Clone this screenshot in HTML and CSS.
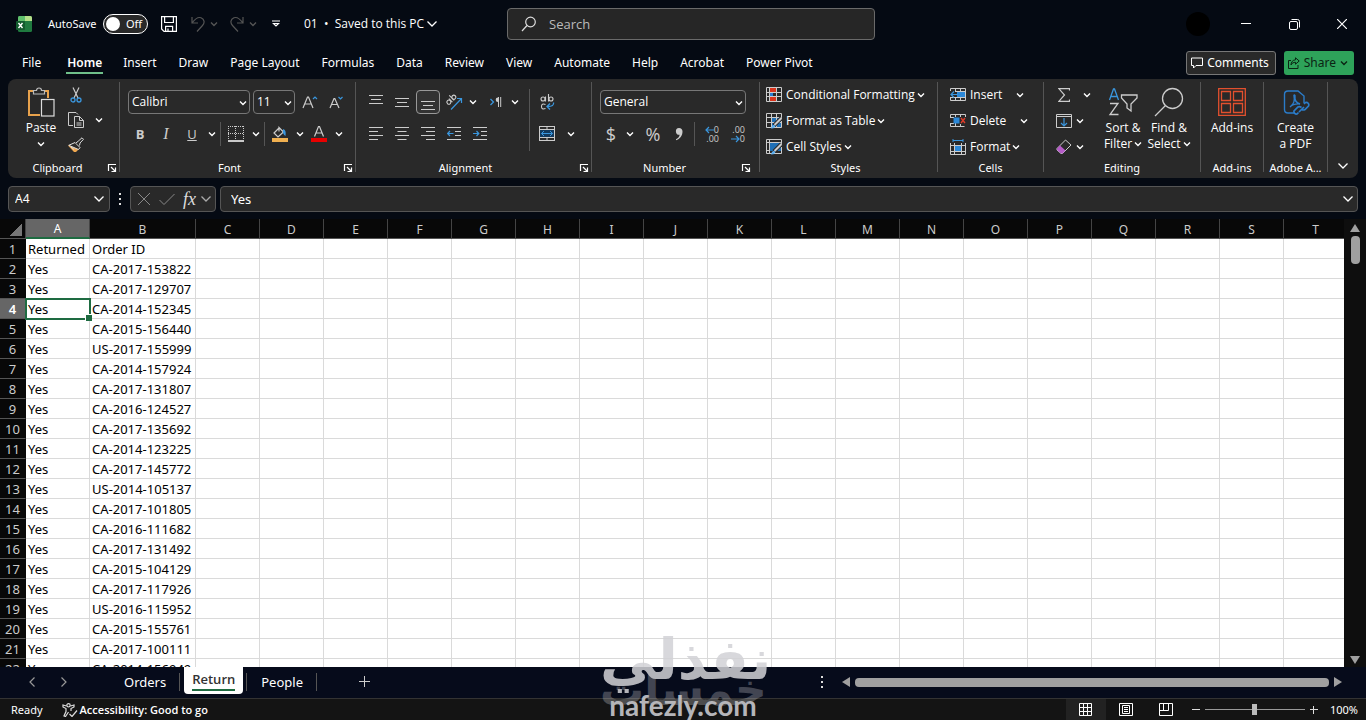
FILE: index.html
```html
<!DOCTYPE html>
<html lang="en">
<head>
<meta charset="UTF-8">
<meta name="viewport" content="width=device-width, initial-scale=1.0">
<title>01 - Excel</title>
<link rel="stylesheet" href="styles.css">
</head>
<body>

<svg class="defs" aria-hidden="true">
    <symbol id="chev" viewBox="0 0 8 8"><path d="M1 2.5l3 3 3-3" fill="none" stroke="currentColor" stroke-width="1.4"/></symbol>
    <symbol id="chevBig" viewBox="0 0 12 12"><path d="M1.500 3.500l4.500 4.500 4.500-4.500" fill="none" stroke="currentColor" stroke-width="1.3"/></symbol>
    <symbol id="launch" viewBox="0 0 10 10"><path d="M1.500 8V1.500H9M4 4l4 4M8.500 4.500v4H4.500" fill="none" stroke="currentColor" stroke-width="1.2"/></symbol>
</svg>

<header class="titlebar">
    <div class="title-left">
        <svg class="logo" width="16" height="16" viewBox="0 0 16 16"><rect x="2" width="14" height="16" rx="1.500" fill="#1f7a3f"/><path d="M2 5V1.500Q2 0 3.500 0H9v5z" fill="#5fbf6c"/><path d="M9 0h5.500Q16 0 16 1.500V5H9z" fill="#b5e08a"/><rect y="5" width="9" height="9" rx="1" fill="#135c2e"/><path d="M2.500 7l4 5M6.500 7l-4 5" stroke="#fff" stroke-width="1.400"/></svg>
        <span class="autosave">AutoSave</span>
        <button class="toggle" aria-label="AutoSave"><i></i>Off</button>
        <button class="qat save" aria-label="Save"><svg width="16" height="16" viewBox="0 0 16 16" fill="none" stroke="#fff" stroke-width="1.200"><path d="M.6.6h14.800v14.800H3L.6 13zM3.600.6v5.900h8.800V.6M4.600 15.400v-5h7v5M7 15v-2.500"/></svg></button>
        <button class="qat dim" aria-label="Undo"><svg width="14" height="16" viewBox="0 0 14 16" fill="none" stroke="currentColor" stroke-width="1.200"><path d="M1 1v6h6M1 7C4 3 7 .6 10 1.800c3.500 1.500 4 5 1.500 7.700L6 15.500"/></svg></button>
        <button class="qat dim small" aria-label="Undo list"><svg width="8" height="8"><use href="#chev"/></svg></button>
        <button class="qat dim" aria-label="Redo"><svg width="14" height="16" viewBox="0 0 14 16" fill="none" stroke="currentColor" stroke-width="1.200"><path d="M13 1v6H7M13 7C10 3 7 .6 4 1.800.5 3.300 0 6.800 2.500 9.500L8 15.500"/></svg></button>
        <button class="qat dim small" aria-label="Redo list"><svg width="8" height="8"><use href="#chev"/></svg></button>
        <button class="qat custom" aria-label="Customize toolbar"><svg width="8" height="8" viewBox="0 0 8 8" fill="none" stroke="#fff" stroke-width="1.200"><path d="M0 1h8M1.500 3.500h5L4 6z"/></svg></button>
        <button class="doc">01&nbsp; •&nbsp; Saved to this PC <svg width="12" height="12"><use href="#chevBig"/></svg></button>
    </div>
    <label class="search">
        <svg width="16" height="16" viewBox="0 0 16 16" fill="none" stroke="#ddd" stroke-width="1.200"><circle cx="9.500" cy="6" r="4.800"/><path d="M6 9.500L1 15"/></svg>
        <input type="text" placeholder="Search" aria-label="Search">
    </label>
    <div class="window">
        <span class="avatar"></span>
        <button aria-label="Minimize"><svg width="10" height="10" viewBox="0 0 10 10"><path d="M0 4.500h10" stroke="#fff"/></svg></button>
        <button aria-label="Restore"><svg width="11" height="11" viewBox="0 0 11 11" fill="none" stroke="#fff"><rect x=".5" y="2.500" width="8" height="8" rx="1.500"/><path d="M2.500.5H8.500a2 2 0 0 1 2 2v6"/></svg></button>
        <button aria-label="Close"><svg width="10" height="10" viewBox="0 0 10 10"><path d="M0 0l10 10M10 0L0 10" stroke="#fff" stroke-width="1.200"/></svg></button>
    </div>
</header>

<nav class="tabs">
    <a href="#" class="file">File</a>
    <a href="#" class="active">Home</a>
    <a href="#">Insert</a>
    <a href="#">Draw</a>
    <a href="#">Page Layout</a>
    <a href="#">Formulas</a>
    <a href="#">Data</a>
    <a href="#">Review</a>
    <a href="#">View</a>
    <a href="#">Automate</a>
    <a href="#">Help</a>
    <a href="#">Acrobat</a>
    <a href="#">Power Pivot</a>
    <button class="comments"><svg width="12" height="12" viewBox="0 0 12 12" fill="none" stroke="#fff"><path d="M.5 1h11v7.500H5L2.500 11V8.500h-2z"/></svg>Comments</button>
    <button class="share"><svg width="12" height="12" viewBox="0 0 12 12" fill="none" stroke="#0b2413"><path d="M3 3.500H.5v8h9.500V8M7.500.8l3.700 3.200-3.700 3.200V5.300C5.500 5.300 4 6 3 8c0-3 1.800-5 4.500-5.200z"/></svg>Share<svg width="8" height="8"><use href="#chev"/></svg></button>
</nav>

<section class="ribbon">
    <div class="group clipboard">
        <div class="body">
            <button class="big paste">
                <svg width="28" height="30" viewBox="0 0 28 30" fill="none"><path d="M6 4H2v24h11M17 4h4v7" stroke="#e8a24c" stroke-width="2"/><path d="M6.500 7V3.500h3a2.500 2.500 0 0 1 5 0h3V7z" stroke="#bbb" stroke-width="1.200"/><rect x="14.500" y="12.500" width="12.500" height="16.500" fill="#292929" stroke="#ddd" stroke-width="1.200"/></svg>
                <span>Paste</span>
                <svg class="under" width="8" height="8"><use href="#chev"/></svg>
            </button>
            <div class="stack">
                <button class="tool" aria-label="Cut"><svg width="12" height="16" viewBox="0 0 12 16" fill="none"><path d="M3 .5l5 10.500M9 .5L4 11" stroke="#ccc" stroke-width="1.200"/><circle cx="3" cy="13" r="2" stroke="#3a96dd" stroke-width="1.300"/><circle cx="9" cy="13" r="2" stroke="#3a96dd" stroke-width="1.300"/></svg></button>
                <button class="tool" aria-label="Copy"><svg width="16" height="16" viewBox="0 0 16 16" fill="none" stroke="#ccc"><path d="M5 13.500H.5V.5H8l2 2M6.500 4.500h5l4 4v7h-9zM11.500 4.500v4h4M8.500 11h5M8.500 13h5"/></svg></button>
                <button class="tool" aria-label="Format Painter"><svg width="16" height="16" viewBox="0 0 16 16"><path d="M0 8.500l6 6.500h2l4-4-5-5z" fill="#f0a850"/><path d="M.8 8.300L7 5.500l5 5-1.500 2z" fill="#292929" stroke="#ddd"/><path d="M8 6l2.200-1.800L14 .8 15.500 2.300 12 6l-.5 2.500" fill="#292929" stroke="#ddd"/><path d="M3 10l3 2.500" stroke="#ddd"/></svg></button>
            </div>
            <button class="drop mid" aria-label="Copy options"><svg width="8" height="8"><use href="#chev"/></svg></button>
        </div>
        <div class="label">Clipboard<button class="launch" aria-label="Clipboard settings"><svg width="10" height="10"><use href="#launch"/></svg></button></div>
    </div>

    <div class="group font">
        <div class="body rows">
            <div class="row">
                <span class="combo face"><select aria-label="Font"><option>Calibri</option></select><svg width="8" height="8"><use href="#chev"/></svg></span>
                <span class="combo size"><select aria-label="Font size"><option>11</option></select><svg width="8" height="8"><use href="#chev"/></svg></span>
                <button class="tool grow" aria-label="Increase font size"><svg width="16" height="16" viewBox="0 0 16 16" fill="none"><path d="M1 14L5.500 3h1L11 14M2.500 10h7" stroke="#ccc" stroke-width="1.200"/><path d="M11 5l2-2 2 2" stroke="#3a96dd" stroke-width="1.200"/></svg></button>
                <button class="tool" aria-label="Decrease font size"><svg width="14" height="16" viewBox="0 0 14 16" fill="none"><path d="M1 14l4-9.500h.8L10 14M2.500 10.500h6" stroke="#ccc" stroke-width="1.200"/><path d="M9.500 3l2 2 2-2" stroke="#3a96dd" stroke-width="1.200"/></svg></button>
            </div>
            <div class="row">
                <button class="tool b">B</button>
                <button class="tool i">I</button>
                <button class="tool u">U</button>
                <button class="drop" aria-label="Underline options"><svg width="8" height="8"><use href="#chev"/></svg></button>
                <i class="sep"></i>
                <button class="tool" aria-label="Borders"><svg width="16" height="16" viewBox="0 0 16 16" fill="none" stroke="#ccc"><path d="M0 .5h16M.5 0v14M15.500 0v14M7.500 0v14M0 7.500h16" stroke-dasharray="1 1"/><path d="M0 15h16" stroke="#fff" stroke-width="1.500"/></svg></button>
                <button class="drop" aria-label="Border options"><svg width="8" height="8"><use href="#chev"/></svg></button>
                <i class="sep"></i>
                <button class="tool" aria-label="Fill colour"><svg width="16" height="16" viewBox="0 0 16 16" fill="none"><path d="M7 2L2 7l4 4 5.500-5L7 1.500v4" stroke="#ccc" stroke-width="1.200"/><path d="M11 3q3.500.5 2.500 7Q10.500 8 11 5" fill="#3a96dd"/><path d="M0 12h16v4H0z" fill="#f0b050"/></svg></button>
                <button class="drop" aria-label="Fill options"><svg width="8" height="8"><use href="#chev"/></svg></button>
                <button class="tool" aria-label="Font colour"><svg width="16" height="16" viewBox="0 0 16 16" fill="none"><path d="M3.500 10.500L7.500.5h1l4 10M5 7h6" stroke="#ccc" stroke-width="1.200"/><path d="M0 12h16v4H0z" fill="#e80000"/></svg></button>
                <button class="drop" aria-label="Font colour options"><svg width="8" height="8"><use href="#chev"/></svg></button>
            </div>
        </div>
        <div class="label">Font<button class="launch" aria-label="Font settings"><svg width="10" height="10"><use href="#launch"/></svg></button></div>
    </div>

    <div class="group align">
        <div class="body">
            <div class="rows">
                <div class="row">
                    <button class="tool" aria-label="Top align"><svg width="14" height="16" viewBox="0 0 14 16"><path d="M0 1.500h14M2 5.500h10M0 9.500h14" stroke="#ccc"/></svg></button>
                    <button class="tool" aria-label="Middle align"><svg width="14" height="16" viewBox="0 0 14 16"><path d="M0 4.500h14M2 8.500h10M0 12.500h14" stroke="#ccc"/></svg></button>
                    <button class="tool on" aria-label="Bottom align"><svg width="14" height="16" viewBox="0 0 14 16"><path d="M0 7.500h14M2 11.500h10M0 15.500h14" stroke="#ccc"/></svg></button>
                    <button class="tool" aria-label="Orientation"><svg width="18" height="18" viewBox="0 0 18 18" fill="none"><g stroke="#ccc" stroke-width="1.100" transform="rotate(-45 6 7)"><circle cx="3" cy="7" r="2"/><path d="M5.500 4.500v5M8 2.500v7"/><circle cx="10" cy="7" r="2"/></g><path d="M6 16.500L16 6M12 5.500h4.500V10" stroke="#3a96dd" stroke-width="1.200"/></svg></button>
                    <button class="drop" aria-label="Orientation options"><svg width="8" height="8"><use href="#chev"/></svg></button>
                    <button class="tool wide" aria-label="Text direction"><svg width="12" height="12" viewBox="0 0 12 12" fill="none"><path d="M.5 3l3 3-3 3" stroke="#3a96dd" stroke-width="1.300"/><path d="M12 1.500H8a2.300 2.300 0 0 0 0 4.600V1.500z" fill="#ccc"/><path d="M8.500 1v10M10.700 1v10" stroke="#ccc"/></svg></button>
                    <button class="drop" aria-label="Direction options"><svg width="8" height="8"><use href="#chev"/></svg></button>
                </div>
                <div class="row">
                    <button class="tool" aria-label="Align left"><svg width="14" height="14" viewBox="0 0 14 14"><path d="M0 .5h14M0 4.500h9M0 8.500h14M0 12.500h9" stroke="#ccc"/></svg></button>
                    <button class="tool" aria-label="Center"><svg width="14" height="14" viewBox="0 0 14 14"><path d="M0 .5h14M2.500 4.500h9M0 8.500h14M2.500 12.500h9" stroke="#ccc"/></svg></button>
                    <button class="tool" aria-label="Align right"><svg width="14" height="14" viewBox="0 0 14 14"><path d="M0 .5h14M5 4.500h9M0 8.500h14M5 12.500h9" stroke="#ccc"/></svg></button>
                    <button class="tool" aria-label="Decrease indent"><svg width="14" height="14" viewBox="0 0 14 14" fill="none"><path d="M0 .5h14M8 4.500h6M8 8.500h6M0 12.500h14" stroke="#ccc"/><path d="M6.500 6.500H1M3 4L.700 6.500 3 9" stroke="#3a96dd" stroke-width="1.200"/></svg></button>
                    <button class="tool" aria-label="Increase indent"><svg width="14" height="14" viewBox="0 0 14 14" fill="none"><path d="M0 .5h14M8 4.500h6M8 8.500h6M0 12.500h14" stroke="#ccc"/><path d="M0 6.500h5.500M3.500 4L5.800 6.500 3.500 9" stroke="#3a96dd" stroke-width="1.200"/></svg></button>
                </div>
            </div>
            <i class="sep tall"></i>
            <div class="rows">
                <div class="row">
                    <button class="tool wrap" aria-label="Wrap text"><svg width="16" height="18" viewBox="0 0 16 18" fill="none"><g stroke="#ccc" stroke-width="1.100"><circle cx="4" cy="6" r="2"/><path d="M6.500 3.500v5M9.500 1v7.500M6.500 11.500q-4-1.500-4 2t4 2"/><circle cx="12" cy="6" r="2"/></g><path d="M14.500 9.500q1 4-6 4M11 10.500l-3 3 3 3" stroke="#3a96dd" stroke-width="1.300"/></svg></button>
                </div>
                <div class="row">
                    <button class="tool wrap" aria-label="Merge and center"><svg width="16" height="16" viewBox="0 0 16 16" fill="none"><rect x=".5" y=".5" width="15" height="14" stroke="#ccc"/><path d="M0 3.500h16M0 11.500h16M8 1v3M8 12v3" stroke="#ccc"/><path d="M1 4h14v7H1z" fill="#123a5e"/><path d="M2.500 7.500h11M5 5L2.500 7.500 5 10M11 5l2.500 2.500L11 10" stroke="#3a96dd"/></svg></button>
                    <button class="drop" aria-label="Merge options"><svg width="8" height="8"><use href="#chev"/></svg></button>
                </div>
            </div>
        </div>
        <div class="label">Alignment<button class="launch" aria-label="Alignment settings"><svg width="10" height="10"><use href="#launch"/></svg></button></div>
    </div>

    <div class="group number">
        <div class="body rows">
            <div class="row">
                <span class="combo format"><select aria-label="Number format"><option>General</option></select><svg width="8" height="8"><use href="#chev"/></svg></span>
            </div>
            <div class="row">
                <button class="tool sign">$</button>
                <button class="drop" aria-label="Currency options"><svg width="8" height="8"><use href="#chev"/></svg></button>
                <button class="tool sign pct">%</button>
                <button class="tool" aria-label="Comma style"><svg width="8" height="14" viewBox="0 0 8 14"><path d="M4 1a3.400 3.400 0 0 1 3.500 3.600C7.500 9 5 12 1 13.300v-1C3.500 11 4.500 9.500 4.600 7.800A3.400 3.400 0 1 1 4 1z" fill="#ccc"/></svg></button>
                <i class="sep"></i>
                <button class="tool dec"><span><svg width="9" height="8" viewBox="0 0 9 8" fill="none" stroke="#3a96dd" stroke-width="1.200"><path d="M9 4H1M4 1L1 4l3 3"/></svg>0</span><span>.00</span></button>
                <button class="tool dec"><span>.00</span><span><svg width="9" height="8" viewBox="0 0 9 8" fill="none" stroke="#3a96dd" stroke-width="1.200"><path d="M0 4h8M5 1l3 3-3 3"/></svg>0</span></button>
            </div>
        </div>
        <div class="label">Number<button class="launch" aria-label="Number settings"><svg width="10" height="10"><use href="#launch"/></svg></button></div>
    </div>

    <div class="group styles">
        <div class="body list">
            <button class="line"><svg width="16" height="16" viewBox="0 0 16 16"><path d="M4 1h6v5H4zM4 10h6v5H4z" fill="#d8341c"/><path d="M4 6h3v4H4z" fill="#2b7cd3"/><path d="M.5.5h15v14h-15zM3.500 0v15M10.500 0v15M0 5.500h16M0 9.500h16" fill="none" stroke="#ccc"/></svg>Conditional Formatting<svg class="c" width="8" height="8"><use href="#chev"/></svg></button>
            <button class="line"><svg width="16" height="16" viewBox="0 0 16 16"><path d="M5 5h10v10H5z" fill="#1f6fb5"/><path d="M.5.5h15v14h-15zM5.500 0v15M10.500 0v15M0 4.500h16M0 9.500h16" fill="none" stroke="#ccc"/><path d="M15.500 5L8 12.500" stroke="#292929" stroke-width="4"/><path d="M15.500 5L8.500 12" stroke="#ccc" stroke-width="2"/><path d="M5 15.500q1-4 3-3.500t1 2-4 1.500" fill="#5fb0f0"/></svg>Format as Table<svg class="c" width="8" height="8"><use href="#chev"/></svg></button>
            <button class="line"><svg width="16" height="16" viewBox="0 0 16 16"><path d="M3 4h12v8H3z" fill="#1f6fb5"/><path d="M.5.5h15v14h-15zM3.500 0v15M0 3.500h16M0 11.500h4" fill="none" stroke="#ccc"/><path d="M15.500 5L8 12.500" stroke="#292929" stroke-width="4"/><path d="M15.500 5L8.500 12" stroke="#ccc" stroke-width="2"/><path d="M5 15.500q1-4 3-3.500t1 2-4 1.500" fill="#5fb0f0"/></svg>Cell Styles<svg class="c" width="8" height="8"><use href="#chev"/></svg></button>
        </div>
        <div class="label">Styles</div>
    </div>

    <div class="group cells">
        <div class="body list">
            <div class="row"><button class="line"><svg width="16" height="16" viewBox="0 0 16 16" fill="none"><path d="M.5 4V1.500h15v12H.5V10M5.500 1v3M10.500 1v12M5.500 10v3.500M5 4.500h11M0 10.500h16" stroke="#ccc"/><path d="M7 5h8v5H7z" fill="#2b88d8"/><path d="M8 7.500H1M4 4.500l-3 3 3 3" stroke="#3a96dd" stroke-width="1.200"/></svg>Insert</button><button class="drop far" aria-label="Insert options"><svg width="8" height="8"><use href="#chev"/></svg></button></div>
            <div class="row"><button class="line"><svg width="16" height="16" viewBox="0 0 16 16" fill="none"><path d="M.5 5V1.500h15V4M5.500 1v3M10.500 1v3M.5 10v3.500h14M5.500 10v3M10.500 11v3M0 4.500h4M0 10.500h4" stroke="#ccc"/><path d="M3.500 4.500h6v6h-6z" fill="#2b88d8"/><path d="M11 5l4 5M15 5l-4 5" stroke="#e03c28" stroke-width="1.400"/></svg>Delete</button><button class="drop far" aria-label="Delete options"><svg width="8" height="8"><use href="#chev"/></svg></button></div>
            <button class="line"><svg width="16" height="16" viewBox="0 0 16 16" fill="none"><path d="M3 0v3M13 0v3M3 1.500h10" stroke="#3a96dd"/><path d="M.5 4v11.500h15V4M4.500 4v11M11.500 4v11M0 6.500h16M0 12.500h16" stroke="#ccc"/><path d="M5 7h6v5H5z" fill="#2b88d8"/></svg>Format<svg class="c" width="8" height="8"><use href="#chev"/></svg></button>
        </div>
        <div class="label">Cells</div>
    </div>

    <div class="group editing">
        <div class="body">
            <div class="list">
                <div class="row"><button class="tool" aria-label="AutoSum"><svg width="12" height="14" viewBox="0 0 12 14" fill="none" stroke="#ccc" stroke-width="1.200"><path d="M11.500 2.500V.6H.8L6.500 7 .8 13.400h10.700v-2"/></svg></button><button class="drop sum" aria-label="AutoSum options"><svg width="8" height="8"><use href="#chev"/></svg></button></div>
                <div class="row"><button class="tool" aria-label="Fill"><svg width="16" height="14" viewBox="0 0 16 14" fill="none"><path d="M.5.5h15v13H.5zM0 2.500h16" stroke="#ccc"/><path d="M8 4v8M5 9l3 3 3-3" stroke="#3a96dd" stroke-width="1.200"/></svg></button><button class="drop" aria-label="Fill options"><svg width="8" height="8"><use href="#chev"/></svg></button></div>
                <div class="row"><button class="tool" aria-label="Clear"><svg width="16" height="16" viewBox="0 0 16 16" fill="none"><path d="M1 9.500L9.500 1 15 6l-8.500 8.500H5L1 11z" stroke="#ccc"/><path d="M1 9.500L4 6.500l5.500 5-3 3H5L1 11z" fill="#b65cc8"/></svg></button><button class="drop" aria-label="Clear options"><svg width="8" height="8"><use href="#chev"/></svg></button></div>
            </div>
            <button class="big">
                <svg width="30" height="28" viewBox="0 0 30 28" fill="none"><path d="M1.500 12L5.500 1h1l4 11M3 8.500h6" stroke="#3a96dd" stroke-width="1.300"/><path d="M2 15.500h8L2 26.500h8.500" stroke="#ccc" stroke-width="1.300"/><path d="M13.500 7H29v3l-6 6v7l-4-3v-4l-5.500-6z" stroke="#ccc" stroke-width="1.300"/></svg>
                <span>Sort &amp;</span><span>Filter <svg width="8" height="8"><use href="#chev"/></svg></span>
            </button>
            <button class="big">
                <svg width="30" height="30" viewBox="0 0 30 30" fill="none" stroke="#ccc" stroke-width="1.300"><circle cx="18.500" cy="11.500" r="10"/><path d="M11.500 18.500L1 29"/></svg>
                <span>Find &amp;</span><span>Select <svg width="8" height="8"><use href="#chev"/></svg></span>
            </button>
        </div>
        <div class="label">Editing</div>
    </div>

    <div class="group addins">
        <div class="body">
            <button class="big">
                <svg width="28" height="28" viewBox="0 0 28 28" fill="none" stroke="#e2502e" stroke-width="1.300"><path d="M.7.7h26.600v26.600H.7zM3.500 3.500h9v9h-9zM15.500 3.500h9v9h-9zM3.500 15.500h9v9h-9zM15.500 15.500h9v9h-9z"/></svg>
                <span>Add-ins</span>
            </button>
        </div>
        <div class="label">Add-ins</div>
    </div>

    <div class="group adobe">
        <div class="body">
            <button class="big">
                <svg width="28" height="28" viewBox="0 0 28 28" fill="none" stroke="#2b7cc9" stroke-width="1.400"><path d="M12 25H6q-3.500 0-3.500-3.500v-15Q2.500 3 6 3h10l6 5v7M8 19c4-3 5-7 4-11-.5-1.500 1.500-1.500 1 1-.5 4 2 6 5 7-5-.5-8 1-10 3z"/><path d="M16.500 24.500l-1.500 1.500a2.500 2.500 0 0 1-3-3l4-4q1.500-1 3.500.5M19.500 21.500q2 1 3.500 0l3.500-3.500a2.500 2.500 0 0 0-3-3.500L22 16M17 24l5-5" stroke-width="1.700"/></svg>
                <span>Create</span><span>a PDF</span>
            </button>
        </div>
        <div class="label">Adobe A...</div>
    </div>

    <button class="collapse" aria-label="Collapse ribbon"><svg width="12" height="12"><use href="#chevBig"/></svg></button>
</section>

<section class="formula">
    <label class="namebox"><input type="text" value="A4" aria-label="Name box"><svg width="12" height="12"><use href="#chevBig"/></svg></label>
    <svg class="dots" width="4" height="12" viewBox="0 0 4 12" fill="#ddd"><path d="M1 0h2v2H1zM1 5h2v2H1zM1 10h2v2H1z"/></svg>
    <div class="fx">
        <svg width="14" height="14" viewBox="0 0 14 14"><path d="M1 1l12 12M13 1L1 13" stroke="#888"/></svg>
        <svg width="16" height="14" viewBox="0 0 16 14"><path d="M.5 8l4.500 4.500L15.500 2" fill="none" stroke="#888"/></svg>
        <button class="fxbtn">fx</button>
        <svg width="12" height="12"><use href="#chevBig"/></svg>
    </div>
    <label class="input"><input type="text" value="Yes" aria-label="Formula"><svg width="12" height="12"><use href="#chevBig"/></svg></label>
</section>

<main class="sheet">
    <div class="gridwrap">
        <table class="grid">
            <colgroup id="cols"></colgroup>
            <thead><tr id="head"></tr></thead>
            <tbody id="rows"></tbody>
        </table>
    </div>
    <div class="vscroll">
        <svg width="10" height="8" viewBox="0 0 10 8"><path d="M5 0l5 8H0z" fill="#a0a0a0"/></svg>
        <i class="thumb"></i>
        <svg class="down" width="10" height="8" viewBox="0 0 10 8"><path d="M5 8L0 0h10z" fill="#a0a0a0"/></svg>
    </div>
</main>

<footer class="sheetbar">
    <button class="nav" aria-label="Previous sheet"><svg width="8" height="12" viewBox="0 0 8 12"><path d="M6.500 1.500L2 6l4.500 4.500" fill="none" stroke="#999" stroke-width="1.200"/></svg></button>
    <button class="nav" aria-label="Next sheet"><svg width="8" height="12" viewBox="0 0 8 12"><path d="M1.500 1.500L6 6l-4.500 4.500" fill="none" stroke="#999" stroke-width="1.200"/></svg></button>
    <div class="sheets">
        <button>Orders</button>
        <button class="active"><span>Return</span></button>
        <button>People</button>
    </div>
    <button class="add" aria-label="New sheet"><svg width="12" height="12" viewBox="0 0 12 12"><path d="M0 5.500h11M5.500 0v11" stroke="#ccc"/></svg></button>
    <div class="hscroll">
        <svg class="grip" width="4" height="12" viewBox="0 0 4 12" fill="#ddd"><path d="M1 0h2v2H1zM1 5h2v2H1zM1 10h2v2H1z"/></svg>
        <svg width="8" height="10" viewBox="0 0 8 10"><path d="M0 5l8-5v10z" fill="#a0a0a0"/></svg>
        <i class="thumb"></i>
        <svg width="8" height="10" viewBox="0 0 8 10"><path d="M8 5L0 0v10z" fill="#a0a0a0"/></svg>
    </div>
</footer>

<footer class="status">
    <span>Ready</span>
    <svg class="acc" width="16" height="14" viewBox="0 0 16 14" fill="none" stroke="#ddd" stroke-width="1.200"><circle cx="6.500" cy="2.300" r="1.700"/><path d="M4.500 3L1 2v2l3 1.500v3L2 13l1.500.5L6.500 9M8.500 3L12 2v2L9 5.500V8M7.500 11l2.500 2.500 5-6"/></svg>
    <b>Accessibility: Good to go</b>
    <div class="views">
        <button class="on" aria-label="Normal"><svg width="14" height="14" viewBox="0 0 14 14" fill="none" stroke="#fff"><path d="M.5.5h12v12H.5zM4.500 0v13M8.500 0v13M0 4.500h13M0 8.500h13"/></svg></button>
        <button aria-label="Page layout"><svg width="14" height="14" viewBox="0 0 14 14" fill="none" stroke="#fff"><path d="M.5.5h13v12H.5zM3.500 2.500h7v8h-7zM5 4.500h4M5 6.500h4M5 8.500h4"/></svg></button>
        <button aria-label="Page break"><svg width="14" height="14" viewBox="0 0 14 14" fill="none" stroke="#fff"><path d="M.5.5h13v12H.5zM4.500 0v7.500M9.500 0v7.500M0 7.500h9.500"/></svg></button>
    </div>
    <div class="zoom">
        <button aria-label="Zoom out"><svg width="8" height="8" viewBox="0 0 8 8"><path d="M0 3.500h8" stroke="#ddd"/></svg></button>
        <input type="range" min="0" max="200" value="100" aria-label="Zoom">
        <button aria-label="Zoom in"><svg width="8" height="8" viewBox="0 0 8 8"><path d="M0 3.500h8M3.500 0v8" stroke="#ddd"/></svg></button>
        <span>100%</span>
    </div>
</footer>

<div class="watermark">
    <span class="ar" lang="ar">نفذلي</span>
    <span class="ar low" lang="ar">خمسات</span>
    <span class="en">nafezly.com</span>
</div>

<script src="script.js"></script>
</body>
</html>
```
FILE: styles.css
```css
* { margin: 0; padding: 0; box-sizing: border-box; }
body { height: 100vh; display: flex; flex-direction: column; overflow: hidden; background: #050a13; color: #fff; font: 12px/16px "Noto Sans", "Open Sans", sans-serif; }
button { background: none; border: none; color: inherit; font: inherit; }
input, select { font: inherit; color: inherit; background: none; border: none; outline: none; }
svg { flex: none; display: block; }
a { color: inherit; text-decoration: none; }
.defs { position: absolute; width: 0; height: 0; }

/* title bar */
.titlebar { display: grid; grid-template-columns: 1fr 368px 1fr; align-items: center; height: 48px; padding-left: 16px; }
.title-left { display: flex; align-items: center; white-space: nowrap; font-size: 11px; }
.autosave { margin-left: 16px; width: 55px; }
.toggle { display: flex; align-items: center; gap: 6px; width: 45px; height: 20px; padding: 0 2px; border: 1px solid #fff; border-radius: 10px; background: #292929; }
.toggle i { width: 14px; height: 14px; border-radius: 50%; background: #fff; }
.qat.save { margin: 0 14px 0 13px; }
.dim { color: #555; }
.dim.small { padding: 0 12px 0 5px; }
.custom { margin: 0 24px 0 3px; }
.doc { display: flex; align-items: center; gap: 2px; font: 12px/16px "Open Sans", sans-serif; }
.search { display: flex; align-items: center; gap: 12px; height: 32px; padding: 0 13px; background: #262626; border: 1px solid #6a6a6a; border-radius: 4px; font: 13px/16px "Open Sans", sans-serif; }
.search input { flex: 1; }
.search input::placeholder { color: #bbb; }
.window { display: flex; justify-content: flex-end; align-items: center; }
.window button { width: 48px; height: 48px; display: flex; align-items: center; justify-content: center; }
.avatar { width: 24px; height: 24px; margin-right: 12px; border-radius: 50%; background: #000; }

/* ribbon tabs */
.tabs { display: flex; align-items: center; height: 31px; padding: 0 12px 1px 11px; }
.tabs a { padding: 0 11px; line-height: 22px; }
.tabs a.file { margin-right: 4px; }
.tabs a.active { padding-right: 10px; font-weight: 600; background: linear-gradient(#6fc08a, #6fc08a) center bottom / 37px 2px no-repeat; }
.comments, .share { display: flex; align-items: center; gap: 4px; height: 24px; padding: 0 6px 0 4px; border-radius: 3px; }
.comments { margin-left: auto; margin-right: 8px; background: #292929; border: 1px solid #777; }
.share { background: #2ea35a; color: #0b2413; }

/* ribbon */
.ribbon { display: flex; margin: 0 8px; padding: 3px 0 6px; background: #292929; border-radius: 8px; font-family: "Open Sans", sans-serif; }
.group { border-right: 1px solid #555; }
.body { display: flex; height: 78px; }
.label { position: relative; height: 12px; font: 11px/16px "Noto Sans", sans-serif; text-align: center; }
.launch { position: absolute; right: 2px; top: 3px; }
.row { display: flex; align-items: center; height: 32px; }
.rows { display: flex; flex-direction: column; padding-top: 4px; }
.list { display: flex; flex-direction: column; }
.list .row, .line { height: 26px; }
.line { display: flex; align-items: center; gap: 4px; white-space: nowrap; }
.line .c { margin-left: -2px; }
.tool { display: flex; align-items: center; justify-content: center; width: 26px; height: 24px; color: #ccc; font-size: 13px; }
.tool.on { border: 1px solid #999; border-radius: 4px; background: #333; width: 24px; margin: 0 1px; }
.drop { display: flex; align-items: center; justify-content: center; width: 12px; height: 24px; }
.sep { width: 1px; height: 24px; margin: 0 2px; background: #555; }
.sep.tall { height: 62px; margin: 7px 5px 0 8px; }
.big { display: flex; flex-direction: column; align-items: center; width: 46px; padding-top: 5px; white-space: nowrap; }
.big > svg:first-child { height: 30px; margin-bottom: 3px; }
.big span { display: flex; align-items: center; gap: 2px; }
.under { margin-top: 4px; }
.combo { position: relative; height: 24px; border: 1px solid #777; border-radius: 4px; }
.combo select { appearance: none; width: 100%; height: 100%; padding-left: 3px; }
.combo svg { position: absolute; right: 2px; top: 8px; pointer-events: none; }

.clipboard { width: 112px; }
.paste { margin-left: 10px; }
.clipboard .stack { margin-left: -1px; }
.clipboard .tool { height: 25px; }
.clipboard .label { padding-right: 12px; }
.mid { margin-top: 26px; margin-left: 4px; }
.font { width: 236px; }
.font .body { padding-left: 7px; }
.font .drop { width: 13px; }
.face { width: 122px; margin: 0 3px 0 1px; }
.size { width: 42px; }
.grow { margin-left: 2px; }
.b { font-weight: 700; }
.i { font-family: "Liberation Serif", serif; font-style: italic; font-size: 16px; }
.u { text-decoration: underline; }
.font .label, .align .label { padding-right: 16px; }
.align { width: 236px; }
.align .rows:first-child { padding-left: 7px; }
.align .wide { margin-left: 4px; }
.wrap { width: 24px; }
.wrap + .drop { margin-left: 6px; }
.number { width: 168px; }
.number .body { padding-left: 6px; }
.number .label { padding-right: 22px; }
.number .launch { right: 8px; }
.format { width: 146px; margin-left: 2px; }
.sign { font-size: 18px; }
.pct { margin-left: 4px; }
.dec { flex-direction: column; font-size: 9px; line-height: 9px; align-items: flex-end; padding-right: 4px; }
.dec span { display: flex; align-items: center; }
.styles { width: 178px; }
.styles .body { padding-left: 6px; }
.styles .label { padding-right: 6px; }
.cells { width: 106px; }
.cells .body { padding-left: 12px; }
.far { margin-left: 12px; }
.editing { width: 157px; }
.editing .list { padding-left: 7px; margin-right: 7px; }
.editing .list .drop { margin-left: -3px; }
.editing .list .sum { margin-left: 4px; }
.addins { width: 63px; }
.adobe { width: 64px; }
.addins .body, .adobe .body { justify-content: center; }
.collapse { align-self: flex-end; margin: 0 auto; }

/* formula bar */
.formula { display: flex; align-items: center; height: 26px; margin: 8px 8px 7px; font-size: 13px; }
.namebox, .fx, .input { display: flex; align-items: center; height: 26px; background: #292929; border: 1px solid #555; border-radius: 4px; }
.namebox { width: 102px; padding: 0 4px 0 6px; font-size: 12px; }
.namebox input, .input input { flex: 1; width: 100%; min-width: 0; }
.dots { margin: 0 8px; }
.fx { width: 86px; gap: 8px; padding: 0 1px 0 6px; color: #aaa; }
.fxbtn { font: italic 18px/20px "Liberation Serif", serif; color: #ddd; }
.fx svg:last-child { margin-left: -4px; }
.input { flex: 1; margin-left: 4px; padding: 0 3px 0 10px; }

/* sheet */
.sheet { flex: 1; min-height: 0; display: flex; }
.gridwrap { flex: 1; min-width: 0; overflow: hidden; background: #fff; }
.grid { width: 1348px; table-layout: fixed; border-collapse: separate; border-spacing: 0; font: 13px/18px "Noto Sans", sans-serif; color: #000; }
.grid th { background: #080808; color: #ccc; font-weight: 400; border-right: 1px solid #444; border-bottom: 1px solid #555; }
.grid thead th { height: 20px; padding-top: 1px; font-size: 12px; line-height: 17px; }
.grid tbody th { border-right-color: #080808; }
.grid td { height: 20px; padding: 1px 2px 0; white-space: nowrap; border-right: 1px solid #dadada; border-bottom: 1px solid #dadada; }
.grid th.sel { background: #666; color: #fff; }
.grid thead th.sel { border-bottom: 2px solid #1e6b41; }
.grid tbody th.sel { font-weight: 600; }
.grid .corner { background: linear-gradient(135deg, #080808 50%, #777 50%) 10px 5px / 12px 12px no-repeat #080808; }
.grid td.cur { position: relative; outline: 2px solid #1e6b41; outline-offset: -1px; }
.grid td.cur::after { content: ""; position: absolute; right: -3px; bottom: -3px; width: 6px; height: 6px; background: #1e6b41; border: 1px solid #fff; border-width: 1px 0 0 1px; }
.c-row { width: 26px; }
.c-b { width: 106px; }
.c-std { width: 64px; }
.vscroll { width: 22px; display: flex; flex-direction: column; align-items: center; gap: 4px; padding: 5px 0 3px; background: #0e0e0e; }
.thumb { border-radius: 4px; background: #a0a0a0; }
.vscroll .thumb { width: 9px; height: 28px; }
.down { margin-top: auto; }

/* sheet tabs */
.sheetbar { display: flex; align-items: center; height: 31px; padding: 0 0 1px 16px; background: #060b1b; font-size: 13px; }
.nav { width: 32px; display: flex; justify-content: center; }
.sheets { display: flex; height: 30px; margin-left: 30px; }
.sheets button { position: relative; height: 30px; padding: 0 14px; }
.sheets button::after { content: ""; position: absolute; right: 0; top: 6px; height: 18px; width: 1px; background: #555; }
.sheets .active { height: 27px; margin: 0 4px; padding: 0 8px 2px; background: #fff; color: #333; font-weight: 600; font-family: "Open Sans", sans-serif; border-radius: 0 0 4px 4px; }
.sheets .active::after { right: -4px; }
.sheets .active span { display: block; border-bottom: 2px solid #1e6b41; line-height: 20px; }
.add { margin-left: 42px; }
.hscroll { flex: 0 1 546px; display: flex; align-items: center; gap: 5px; margin-left: auto; padding-right: 24px; }
.grip { margin-right: 13px; }
.hscroll .thumb { flex: 1; height: 9px; }

/* status bar */
.status { display: flex; align-items: center; height: 22px; padding: 0 8px 0 11px; background: #141414; border-top: 1px solid #333; font-size: 11px; }
.acc { margin: 0 2px 0 19px; }
.status b { font: 600 11px/16px "Open Sans", sans-serif; }
.views { display: flex; margin-left: auto; }
.views button { width: 40px; height: 21px; display: flex; align-items: center; justify-content: center; }
.views .on { background: #222; }
.zoom { display: flex; align-items: center; gap: 5px; padding-left: 6px; }
.zoom input { appearance: none; width: 100px; height: 12px; background: linear-gradient(#999, #999) center / 100% 1px no-repeat; }
.zoom input::-webkit-slider-thumb { appearance: none; width: 5px; height: 11px; background: #bbb; }
.zoom span { margin-left: 7px; }

/* site watermark over the page */
.watermark { position: absolute; left: 600px; bottom: 0; width: 166px; height: 90px; color: #d2d2d6; text-align: center; pointer-events: none; opacity: .85; }
.watermark span { position: absolute; left: 0; width: 100%; white-space: nowrap; }
.ar { top: 0; font: 700 56px/60px "DejaVu Sans", sans-serif; }
.watermark .low { top: 30px; opacity: .35; font-size: 44px; }
.en { bottom: 1px; font: 700 28px/28px Lato, sans-serif; }
```
FILE: script.js
```js
const orders = [
    'CA-2017-153822', 'CA-2017-129707', 'CA-2014-152345', 'CA-2015-156440',
    'US-2017-155999', 'CA-2014-157924', 'CA-2017-131807', 'CA-2016-124527',
    'CA-2017-135692', 'CA-2014-123225', 'CA-2017-145772', 'US-2014-105137',
    'CA-2017-101805', 'CA-2016-111682', 'CA-2017-131492', 'CA-2015-104129',
    'CA-2017-117926', 'US-2016-115952', 'CA-2015-155761', 'CA-2017-100111',
    'CA-2014-156949'
];
const letters = 'ABCDEFGHIJKLMNOPQRST'.split('');
const rows = [['Returned', 'Order ID']].concat(orders.map(o => ['Yes', o]));

document.getElementById('cols').innerHTML = '<col class="c-row">' +
    letters.map(l => `<col class="${l === 'B' ? 'c-b' : 'c-std'}">`).join('');

document.getElementById('head').innerHTML = '<th class="corner"></th>' +
    letters.map(l => `<th class="${l === 'A' ? 'sel' : ''}">${l}</th>`).join('');

document.getElementById('rows').innerHTML = rows.map((r, i) => `
    <tr>
        <th class="${i === 3 ? 'sel' : ''}">${i + 1}</th>
        ${letters.map((l, c) => `<td class="${i === 3 && c === 0 ? 'cur' : ''}">${r[c] || ''}</td>`).join('')}
    </tr>
`).join('');
```
